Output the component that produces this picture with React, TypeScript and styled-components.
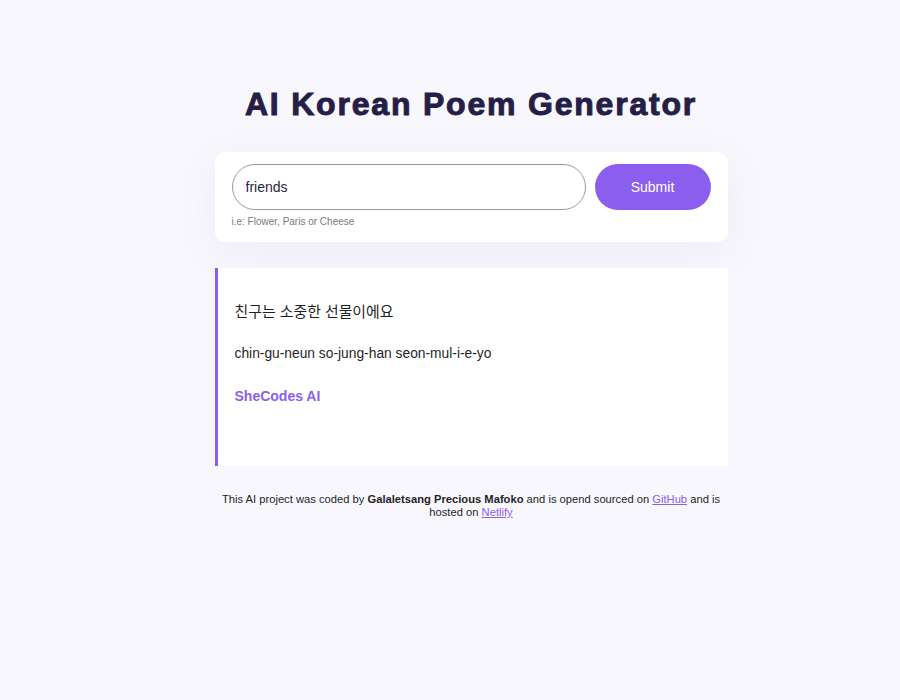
import React from "react";
import styled, { createGlobalStyle } from "styled-components";

const Global = createGlobalStyle`
  html, body { margin: 0; padding: 0; background: #f8f7fd; }
  body { font-family: "Liberation Sans", Arial, sans-serif; }
`;

const Page = styled.div`
  min-height: 700px;
  display: flex;
  justify-content: center;
  padding-left: 42px;
  box-sizing: border-box;
`;

const Container = styled.div`
  width: 513px;
  display: flex;
  flex-direction: column;
  padding-top: 84px;
`;

const Title = styled.h1`
  margin: 0 0 28px;
  text-align: center;
  font-family: "Liberation Sans", Arial, sans-serif;
  font-weight: 900;
  font-size: 32px;
  line-height: 40px;
  color: #261e47;
  letter-spacing: 1.8px;
  -webkit-text-stroke: 1px #261e47;
  white-space: nowrap;
`;

const FormCard = styled.form`
  background: #fff;
  border-radius: 10px;
  padding: 12px 17px 15px;
  box-shadow: 0 10px 40px rgba(120, 100, 200, 0.08);
`;

const Row = styled.div`
  display: flex;
  gap: 9px;
`;

const Input = styled.input`
  flex: 1;
  height: 46px;
  box-sizing: border-box;
  border: 1px solid #9a9a9f;
  border-radius: 25px;
  padding: 0 13px;
  font-family: "Liberation Sans", Arial, sans-serif;
  font-size: 14px;
  color: #2a2540;
  outline: none;
`;

const Button = styled.button`
  width: 116px;
  height: 46px;
  border: none;
  border-radius: 25px;
  background: #8c5ef0;
  color: #fff;
  font-family: "Liberation Sans", Arial, sans-serif;
  font-size: 14px;
`;

const Hint = styled.div`
  margin-top: 6px;
  font-size: 10px;
  color: #7a7a7a;
`;

const PoemCard = styled.div`
  margin-top: 26px;
  background: #fff;
  border-left: 3px solid #8c5ef0;
  height: 198px;
  box-sizing: border-box;
  padding: 35px 17px 0;
  color: #1f1f1f;
`;

const Line = styled.p<{ $korean?: boolean }>`
  margin: 0 0 24px;
  line-height: 18px;
  font-size: ${(p) => (p.$korean ? "14.9px" : "13.8px")};
  font-family: "Liberation Sans", "Noto Sans CJK KR", sans-serif;
`;

const Signature = styled.strong`
  display: block;
  color: #8c5ef0;
  font-weight: 700;
  font-size: 14px;
  line-height: 18px;
`;

const Footer = styled.footer`
  margin-top: 27px;
  text-align: center;
  font-size: 11.2px;
  line-height: 13px;
  color: #1f1f1f;
`;

const Link = styled.a`
  color: #8c5ef0;
  text-decoration: underline;
`;

export default function App() {
  return (
    <>
      <Global />
      <Page>
        <Container>
          <Title>AI Korean Poem Generator</Title>
          <FormCard onSubmit={(e) => e.preventDefault()}>
            <Row>
              <Input defaultValue="friends" />
              <Button type="submit">Submit</Button>
            </Row>
            <Hint>i.e: Flower, Paris or Cheese</Hint>
          </FormCard>
          <PoemCard>
            <Line $korean>친구는 소중한 선물이에요</Line>
            <Line>chin-gu-neun so-jung-han seon-mul-i-e-yo</Line>
            <Signature>SheCodes AI</Signature>
          </PoemCard>
          <Footer>
            This AI project was coded by <b>Galaletsang Precious Mafoko</b> and is
            opend sourced on <Link href="#">GitHub</Link> and is hosted on{" "}
            <Link href="#">Netlify</Link>
          </Footer>
        </Container>
      </Page>
    </>
  );
}
